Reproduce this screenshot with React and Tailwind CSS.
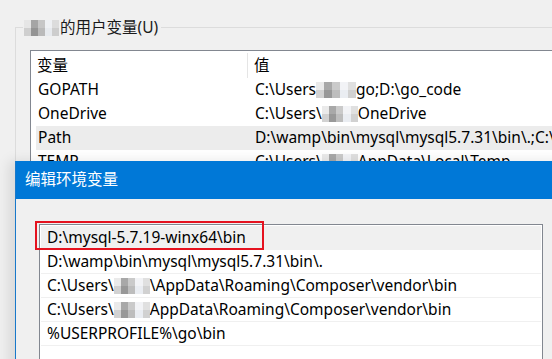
import React from "react";

function Mosaic({ w = "w-[36px]" }) {
  return (
    <span className={`inline-grid grid-cols-5 grid-rows-2 h-[16px] ${w} shrink-0 opacity-75`}>
      <span className="bg-[#e3e3e3]" />
      <span className="bg-[#8c8c8c]" />
      <span className="bg-[#b9b9b9]" />
      <span className="bg-[#eef0f4]" />
      <span className="bg-[#d6d6d6]" />
      <span className="bg-[#c4c4c4]" />
      <span className="bg-[#767676]" />
      <span className="bg-[#a8a8a8]" />
      <span className="bg-[#e4e8ee]" />
      <span className="bg-[#c2c2c2]" />
    </span>
  );
}

function BgRow({ name, children, selected }) {
  return (
    <div className={`flex h-[24px] items-center whitespace-nowrap ${selected ? "bg-[#ececec]" : ""}`}>
      <div className="w-[212px] shrink-0 pl-[2px]">{name}</div>
      <div className="flex items-center pl-[7px]">{children}</div>
    </div>
  );
}

function DRow({ children, first }) {
  return (
    <div className={`relative flex h-[24px] items-center border-b border-[#f0f0f0] pl-[6px] whitespace-nowrap ${first ? "bg-[#f0f0f0]" : ""}`}>
      {children}
      {first && (
        <div className="absolute left-[-6px] top-[-5px] w-[229px] h-[29px] border-2 border-[#e5121f]" />
      )}
    </div>
  );
}

export default function App() {
  return (
    <div className="relative w-[552px] h-[359px] overflow-hidden bg-[#f0f0f0] text-[15.5px] leading-none text-black font-['Noto_Sans','Noto_Sans_CJK_SC',sans-serif]">
      {/* background window: group box */}
      <div className="relative ml-[15px] mt-[27px] h-[400px] border-l border-t border-[#dcdcdc] pl-[14px] pt-[22px]">
        <div className="absolute -top-[10px] left-[7px] flex h-[20px] items-center gap-[1px] bg-[#f0f0f0] pl-[1px] pr-[3px] text-[#1a1a1a]">
          <Mosaic w="w-[35px]" />
          <span>的用户变量(U)</span>
        </div>
        <div className="w-[600px] border border-[#828790] bg-white">
          <div className="flex h-[27px] items-center pt-[2px]">
            <div className="w-[216px] shrink-0 pl-[6px]">变量</div>
            <div className="h-[25px] border-l border-[#e5e5e5]" />
            <div className="pl-[6px]">值</div>
          </div>
          <div className="pl-[5px]">
            <BgRow name="GOPATH">
              <span>C:\Users</span>
              <Mosaic w="w-[40px]" />
              <span>go;D:\go_code</span>
            </BgRow>
            <BgRow name="OneDrive">
              <span>C:\Users\</span>
              <Mosaic w="w-[36px]" />
              <span>OneDrive</span>
            </BgRow>
            <BgRow name="Path" selected>
              <span>D:\wamp\bin\mysql\mysql5.7.31\bin\.;C:\Users</span>
            </BgRow>
            <BgRow name="TEMP">
              <span>C:\Users\</span>
              <Mosaic w="w-[36px]" />
              <span>AppData\Local\Temp</span>
            </BgRow>
          </div>
        </div>
      </div>

      {/* foreground dialog */}
      <div className="absolute left-[15px] top-[161px] w-[560px] h-[220px] border-l border-[#1979ca] bg-[#f0f0f0] shadow-[-6px_0_12px_rgba(0,0,0,0.10)]">
        <div className="flex h-[38px] items-center bg-[#0078d7] pl-[9px] text-white">编辑环境变量</div>
        <div className="pl-[23px] pt-[25px]">
          <div className="w-[504px] h-[200px] border border-[#828790] bg-white p-[1px]">
            <DRow first>D:\mysql-5.7.19-winx64\bin</DRow>
            <DRow>D:\wamp\bin\mysql\mysql5.7.31\bin\.</DRow>
            <DRow>
              <span>C:\Users\</span>
              <Mosaic w="w-[36px]" />
              <span>\AppData\Roaming\Composer\vendor\bin</span>
            </DRow>
            <DRow>
              <span>C:\Users\</span>
              <Mosaic w="w-[36px]" />
              <span>AppData\Roaming\Composer\vendor\bin</span>
            </DRow>
            <DRow>%USERPROFILE%\go\bin</DRow>
            <DRow />
          </div>
        </div>
      </div>
    </div>
  );
}
